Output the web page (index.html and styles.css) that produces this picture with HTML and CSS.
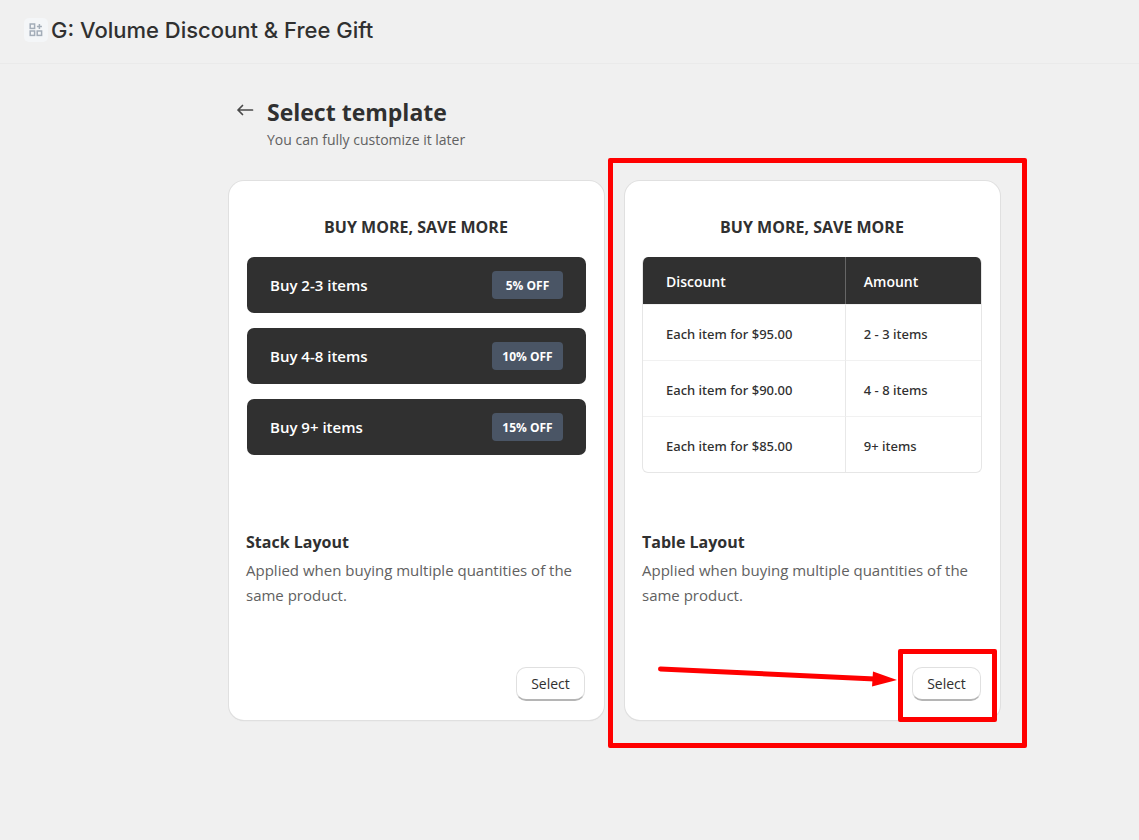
FILE: index.html
```html
<!DOCTYPE html>
<html lang="en">
<head>
  <meta charset="UTF-8">
  <meta name="viewport" content="width=device-width, initial-scale=1.0">
  <title>G: Volume Discount &amp; Free Gift</title>
  <link rel="stylesheet" href="styles.css">
</head>
<body>
  <header class="topbar">
    <span class="app-icon">
      <svg width="14" height="14" viewBox="0 0 14 14" fill="none" stroke="#a3adb8" stroke-width="1.5">
        <rect x="1.2" y="1" width="4.4" height="4.4"/>
        <rect x="1.2" y="8" width="4.4" height="4.4"/>
        <rect x="8.2" y="8" width="4.4" height="4.4"/>
        <path d="M10.4 1v5M7.9 3.5h5"/>
      </svg>
    </span>
    <span class="app-name">G: Volume Discount &amp; Free Gift</span>
  </header>

  <main class="page">
    <div class="page-header">
      <a href="#" class="back" aria-label="Back">
        <svg width="18" height="14" viewBox="0 0 18 14" fill="none" stroke="#4a4a4a" stroke-width="1.7" stroke-linecap="round" stroke-linejoin="round">
          <path d="M16.5 7H2M6.500 2.500L2 7l4.500 4.500"/>
        </svg>
      </a>
      <div>
        <h1>Select template</h1>
        <p class="subtitle">You can fully customize it later</p>
      </div>
    </div>

    <div class="templates">
      <section class="card">
        <div class="preview">
          <h2 class="preview-title">BUY MORE, SAVE MORE</h2>
          <div class="stack">
            <div class="stack-item"><span>Buy 2-3 items</span><span class="badge">5% OFF</span></div>
            <div class="stack-item"><span>Buy 4-8 items</span><span class="badge">10% OFF</span></div>
            <div class="stack-item"><span>Buy 9+ items</span><span class="badge">15% OFF</span></div>
          </div>
        </div>
        <h3>Stack Layout</h3>
        <p class="description">Applied when buying multiple quantities of the same product.</p>
        <div class="actions">
          <button type="button">Select</button>
        </div>
      </section>

      <section class="card">
        <div class="preview">
          <h2 class="preview-title">BUY MORE, SAVE MORE</h2>
          <table>
            <thead>
              <tr><th>Discount</th><th>Amount</th></tr>
            </thead>
            <tbody>
              <tr><td>Each item for $95.00</td><td>2 - 3 items</td></tr>
              <tr><td>Each item for $90.00</td><td>4 - 8 items</td></tr>
              <tr><td>Each item for $85.00</td><td>9+ items</td></tr>
            </tbody>
          </table>
        </div>
        <h3>Table Layout</h3>
        <p class="description">Applied when buying multiple quantities of the same product.</p>
        <div class="actions">
          <button type="button">Select</button>
          <span class="mark mark-button"></span>
          <svg class="arrow" width="240" height="26" viewBox="0 0 240 26">
            <path d="M3.5 5L218 15" stroke="#f00" stroke-width="5" stroke-linecap="round"/>
            <path d="M216 7.500L240 16L215 22.500z" fill="#f00"/>
          </svg>
        </div>
        <span class="mark mark-card"></span>
      </section>
    </div>
  </main>
</body>
</html>
```

FILE: styles.css
```css
* {
  box-sizing: border-box;
}

body {
  margin: 0;
  background: #f0f0f0;
  color: #303030;
  font-family: "Open Sans", "Noto Sans", sans-serif;
  font-size: 16px;
}

h1, h2, h3, p {
  margin: 0;
}

.topbar {
  display: flex;
  align-items: center;
  gap: 3px;
  height: 64px;
  padding: 0 24px 3px;
  border-bottom: 1px solid #eaeaea;
}

.app-icon {
  display: flex;
  align-items: center;
  justify-content: center;
  width: 24px;
  height: 24px;
  border-radius: 5px;
  background: #f4f6f8;
}

.app-name {
  font-family: Inter, sans-serif;
  font-size: 22px;
  font-weight: 500;
}

.page {
  padding: 32px 139px 40px 229px;
}

.page-header {
  display: flex;
  gap: 13px;
  padding-left: 7px;
}

.back {
  display: flex;
  height: 14px;
  margin-top: 7px;
}

h1 {
  font-size: 23px;
  line-height: 32px;
}

.subtitle {
  color: #616161;
  font-size: 14px;
  line-height: 24px;
}

.templates {
  display: grid;
  grid-template-columns: 1fr 1fr;
  gap: 21px;
  margin-top: 29px;
}

.card {
  display: flex;
  flex-direction: column;
  position: relative;
  padding: 34px 18px 19px 17px;
  border-radius: 15px;
  background: #fff;
  box-shadow: 0 0 0 1px #e0e0e0, 0 1px 1px #c8c8c8;
}

.preview {
  min-height: 315px;
}

.preview-title {
  margin-bottom: 18px;
  font-size: 16px;
  font-weight: 700;
  line-height: 24px;
  text-align: center;
}

.stack {
  display: grid;
  gap: 15px;
  padding-left: 1px;
}

.stack-item {
  display: flex;
  align-items: center;
  justify-content: space-between;
  height: 56px;
  padding: 0 23px;
  border-radius: 7px;
  background: #303030;
  color: #fff;
  font-size: 15px;
  font-weight: 600;
}

.badge {
  width: 71px;
  padding-top: 1px;
  border-radius: 4px;
  background: #4a5565;
  font-size: 12px;
  font-weight: 700;
  line-height: 27px;
  text-align: center;
}

table {
  width: 100%;
  border: 1px solid #e6e6e6;
  border-top: 0;
  border-spacing: 0;
  border-radius: 6px;
  overflow: hidden;
  font-family: "Noto Sans", sans-serif;
  font-size: 13px;
  font-weight: 500;
}

th, td {
  height: 56px;
  padding: 2px 18px 0;
  border-top: 1px solid #f1f1f1;
  text-align: left;
}

th {
  height: 47px;
  border-top: 0;
  background: #303030;
  color: #fff;
  font-family: "Open Sans", sans-serif;
  font-size: 14px;
  font-weight: 600;
}

th:first-child, td:first-child {
  width: 60%;
  padding-left: 23px;
  border-right: 1px solid #e8e8e8;
}

th:first-child {
  border-right-color: #666;
}

h3 {
  font-size: 16px;
  line-height: 24px;
}

.description {
  margin-top: 4px;
  color: #616161;
  font-size: 15px;
  line-height: 25px;
}

.actions {
  position: relative;
  align-self: flex-end;
  margin: 59px 1px 0 0;
}

button {
  display: block;
  width: 69px;
  height: 34px;
  padding: 0;
  border: 1px solid #e0e0e0;
  border-bottom: 2px solid #b5b5b5;
  border-radius: 10px;
  background: #fff;
  color: #303030;
  font-family: inherit;
  font-size: 14px;
  font-weight: 500;
  cursor: pointer;
}

button:hover {
  background: #fafafa;
}

.mark {
  position: absolute;
  border: 5px solid #f00;
  border-radius: 2px;
  pointer-events: none;
}

.mark-card {
  inset: -23px -27px -28px -17px;
}

.mark-button {
  inset: -18px -16px -21px -14px;
}

.arrow {
  position: absolute;
  top: -3px;
  right: 84px;
}
```
